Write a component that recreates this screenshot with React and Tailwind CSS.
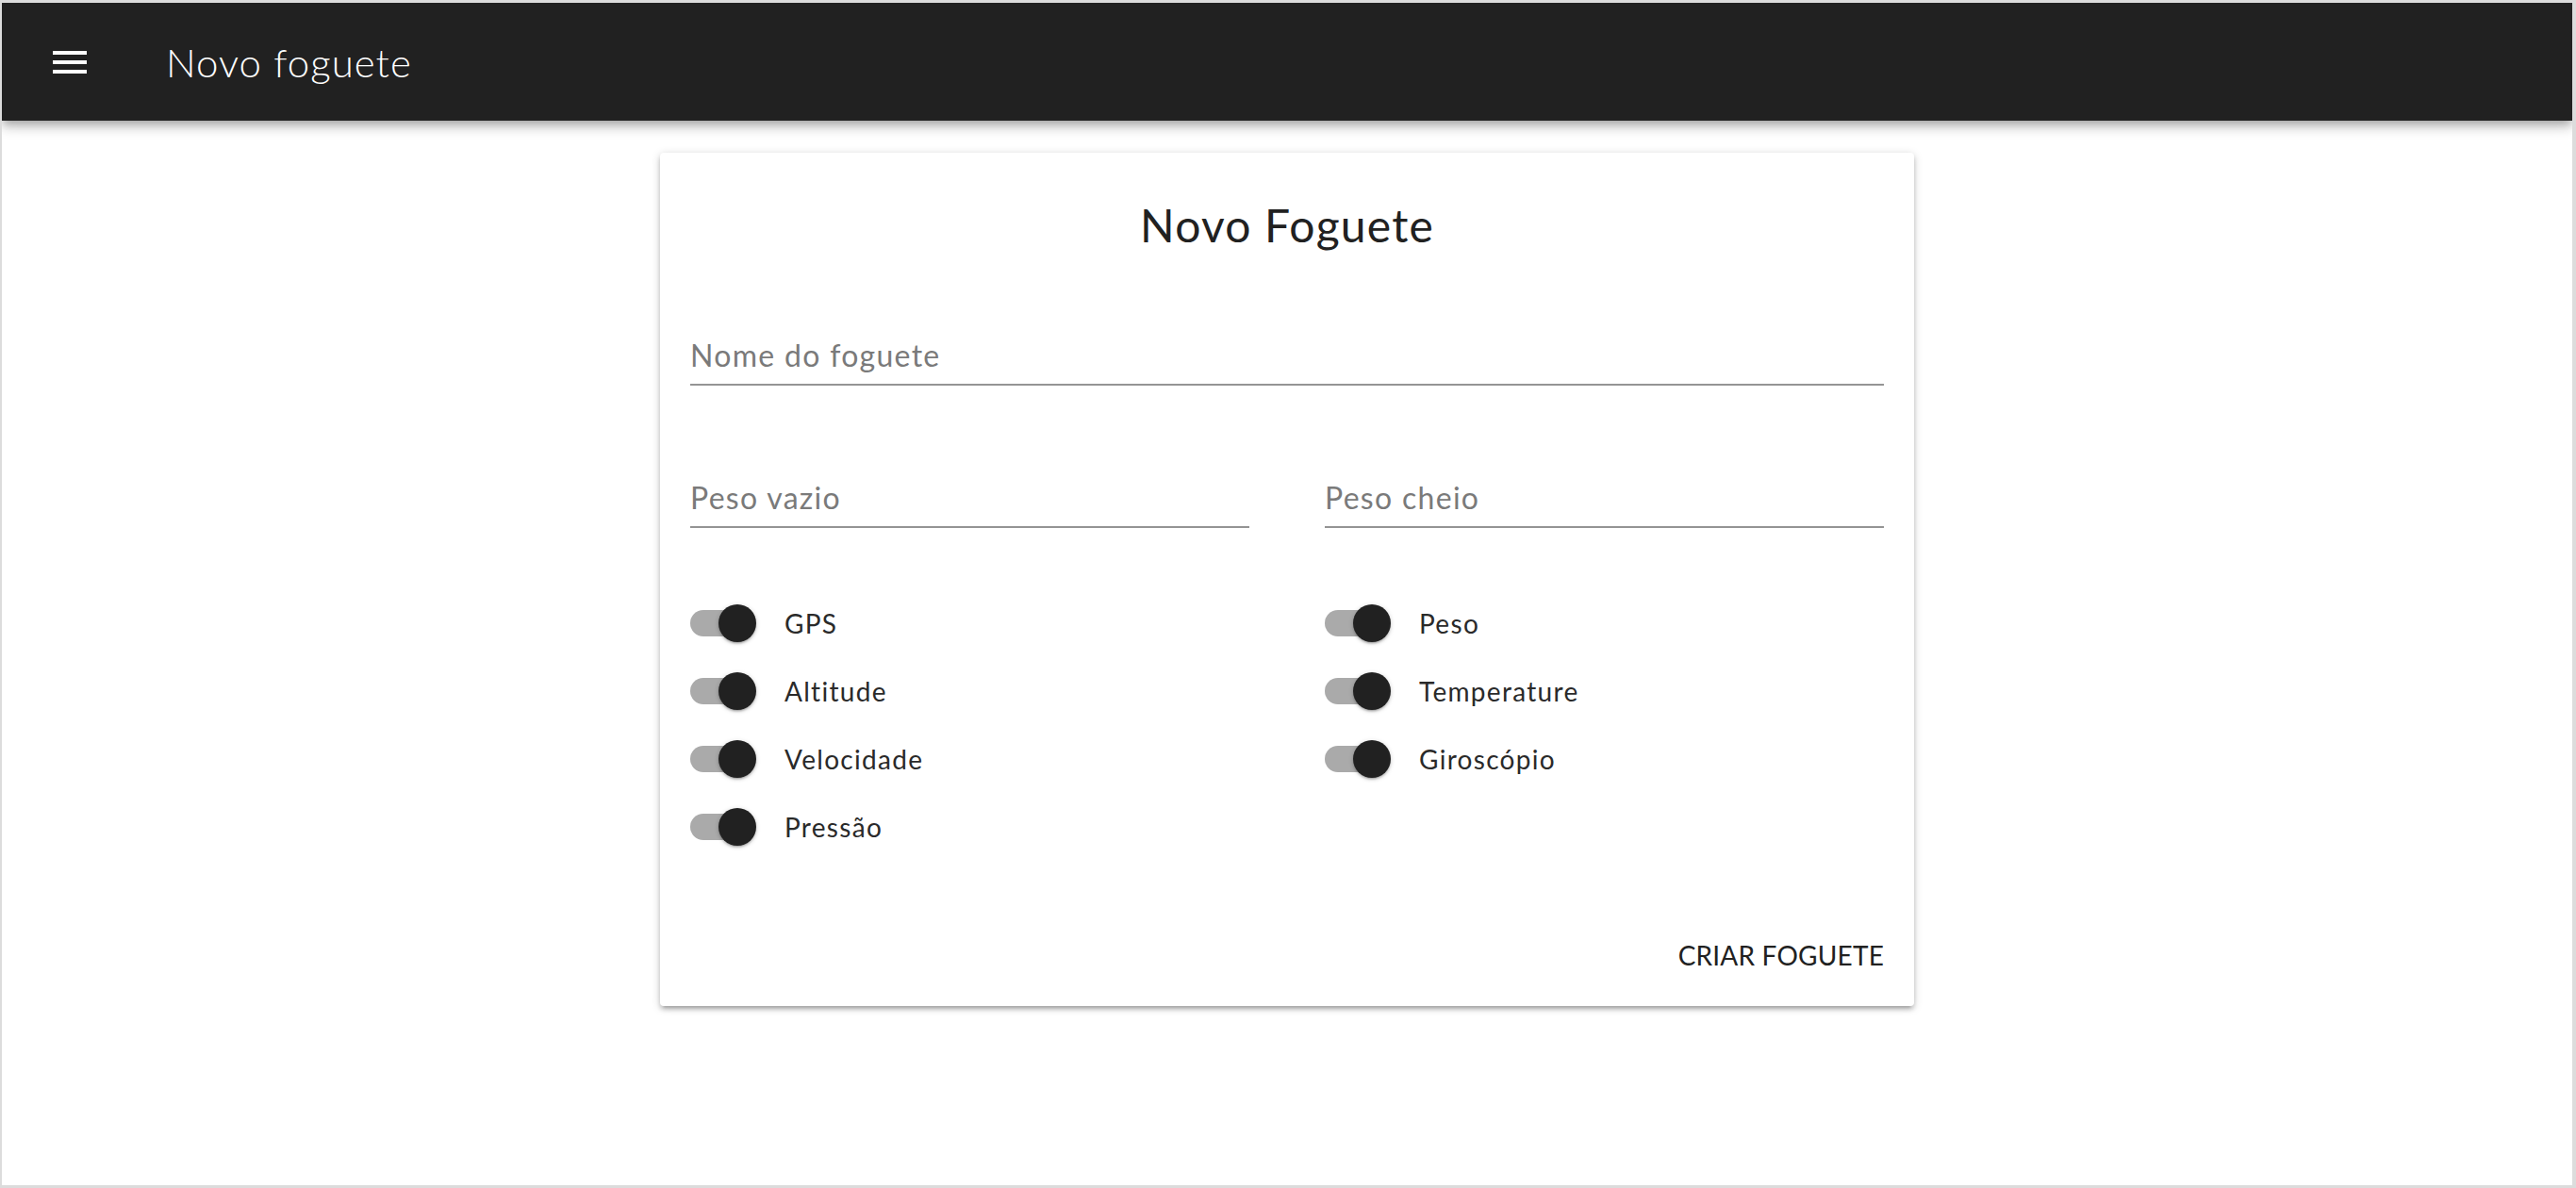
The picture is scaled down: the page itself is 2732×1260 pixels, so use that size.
import React from "react";

function Field({ label, className = "" }) {
  return (
    <div className={className}>
      <div className="text-[32px] leading-[40px] tracking-[1.3px] text-[#7a7a7a] pb-[10px]">{label}</div>
      <div className="h-[2px] bg-[#949494]" />
    </div>
  );
}

function SwitchRow({ label }) {
  return (
    <div className="flex items-center h-[72px]">
      <div className="relative w-[70px] h-[40px] shrink-0">
        <div className="absolute left-0 top-[6px] w-[68px] h-[28px] rounded-full bg-[#aaaaaa]" />
        <div className="absolute left-[30px] top-0 w-[40px] h-[40px] rounded-full bg-[#212121] shadow-[0_2px_2px_0_rgba(0,0,0,0.14),0_3px_1px_-2px_rgba(0,0,0,0.12),0_1px_5px_0_rgba(0,0,0,0.2)]" />
      </div>
      <span className="ml-[30px] text-[28px] leading-[36px] tracking-[1.3px] text-[#2a2a2a]">{label}</span>
    </div>
  );
}

export default function App() {
  return (
    <div className="w-[2732px] h-[1260px] box-border overflow-hidden border-t-[3px] border-l-2 border-r-4 border-b-[3px] border-[#dcdcdc] bg-white font-['Lato',sans-serif]">
      <header className="relative z-10 h-[125px] bg-[#212121] flex items-center shadow-[0_4px_8px_-2px_rgba(0,0,0,0.2),0_8px_10px_0_rgba(0,0,0,0.14),0_2px_20px_0_rgba(0,0,0,0.12)]">
        <svg className="ml-[48px] w-[48px] h-[48px] shrink-0" viewBox="0 0 24 24" fill="#ffffff">
          <path d="M3 18h18v-2H3v2zm0-5h18v-2H3v2zm0-7v2h18V6H3z" />
        </svg>
        <h1 className="ml-[78px] text-[42px] leading-[56px] tracking-[1px] text-white font-light">Novo foguete</h1>
      </header>
      <main className="pt-[34px]">
        <div className="mx-auto w-[1330px] bg-white rounded-[4px] px-[32px] pt-[49px] pb-[18px] shadow-[0_4px_4px_0_rgba(0,0,0,0.14),0_6px_2px_-4px_rgba(0,0,0,0.12),0_2px_10px_0_rgba(0,0,0,0.2)]">
          <h2 className="text-center text-[48px] leading-[56px] tracking-[1.2px] text-[#212121]">Novo Foguete</h2>
          <Field className="mt-[90px]" label="Nome do foguete" />
          <div className="grid grid-cols-2 gap-x-[80px] mt-[99px]">
            <Field label="Peso vazio" />
            <Field label="Peso cheio" />
          </div>
          <div className="grid grid-cols-2 gap-x-[80px] mt-[65px]">
            <div className="flex flex-col">
              <SwitchRow label="GPS" />
              <SwitchRow label="Altitude" />
              <SwitchRow label="Velocidade" />
              <SwitchRow label="Pressão" />
            </div>
            <div className="flex flex-col">
              <SwitchRow label="Peso" />
              <SwitchRow label="Temperature" />
              <SwitchRow label="Giroscópio" />
            </div>
          </div>
          <div className="flex justify-end mt-[64px]">
            <button className="h-[72px] px-[16px] -mr-[16px] text-[28px] uppercase tracking-[0.2px] text-[#212121] rounded-[4px]">
              Criar foguete
            </button>
          </div>
        </div>
      </main>
    </div>
  );
}
